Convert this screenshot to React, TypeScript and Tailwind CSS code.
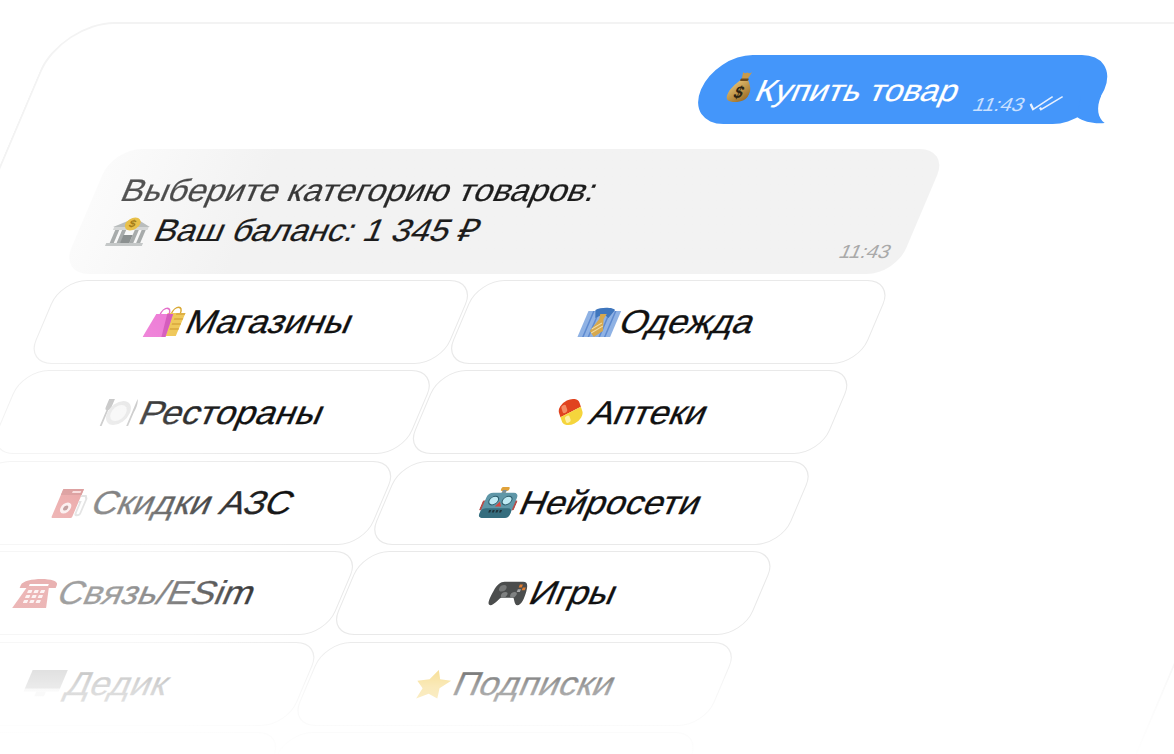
import type { ReactNode } from 'react'

function Glyph({ box, className, children }: { box: string; className: string; children: ReactNode }) {
  return (
    <svg viewBox={box} preserveAspectRatio="none" className={`shrink-0 ${className}`}>
      {children}
    </svg>
  )
}

function MoneyBag() {
  return (
    <Glyph box="4 0 24 32" className="-mt-[6px] w-[20px] h-[32px]">
      <defs>
        <linearGradient id="bagFill" x1="0" y1="0" x2="1" y2="1">
          <stop offset="0" stopColor="#ecc878" />
          <stop offset="1" stopColor="#94651f" />
        </linearGradient>
      </defs>
      <path d="M11 1c2 1.500 3 1.500 5 .5 2 1 3.500 1 5-.5l-2 8h-6z" fill="#c99a4a" />
      <path d="M12 9c-4 4-8 9-8 14 0 6 5 8 12 8s12-2 12-8c0-5-4-10-8-14z" fill="url(#bagFill)" />
      <rect x="11.500" y="7.500" width="9" height="2.500" rx="1" fill="#6d4a1c" />
      <text x="16" y="27" textAnchor="middle" fontSize="17" fontWeight="700" fill="#2c2413" fontFamily="Liberation Sans, sans-serif">$</text>
    </Glyph>
  )
}

function Bank() {
  return (
    <Glyph box="0 0 36 32" className="w-[38px] h-[32px]">
      <path d="M18 3 34 12H2z" fill="#b9bdbd" />
      <rect x="3" y="12" width="30" height="3" fill="#d4d6d6" />
      {[5, 11, 22, 28].map((x) => (
        <rect key={x} x={x} y="15" width="3.500" height="13" fill="#a7abab" />
      ))}
      <rect x="14" y="20" width="8" height="8" fill="#8b9090" />
      <rect x="2" y="28" width="32" height="3" fill="#c5c8c8" />
      <circle cx="18" cy="9" r="6.500" fill="#e8c04a" />
      <text x="18" y="12.500" textAnchor="middle" fontSize="10" fontWeight="700" fill="#a47c18" fontFamily="Liberation Sans, sans-serif">$</text>
    </Glyph>
  )
}

function Bags() {
  return (
    <Glyph box="0 0 34 32" className="w-[31px] h-[32px]">
      <path d="M19 8c0-9 9-9 9 0" fill="none" stroke="#d9a935" strokeWidth="1.500" />
      <rect x="15" y="7" width="18" height="23" fill="#efc85a" />
      <path d="M24 8h9M24 13h9M24 18h9M24 23h9" stroke="#d9a73c" strokeWidth="1.500" />
      <path d="M8 9c0-9 9-9 9 0" fill="none" stroke="#e36fc9" strokeWidth="1.500" />
      <path d="M4 8h17l2 23H0z" fill="#ee7ed7" />
      <path d="M15 8l4 23h4L21 8z" fill="#d55dbd" />
    </Glyph>
  )
}

function Shirt() {
  return (
    <Glyph box="0 0 32 30" className="w-[32px] h-[30px]">
      <rect x="1" y="4" width="30" height="26" fill="#8fb2e4" />
      <path d="M6 4v26M11 4v26M21 4v26M26 4v26" stroke="#5f8bd0" strokeWidth="1.500" />
      <path d="M7 3c3-3 15-3 18 0l-3 8-6-4-6 4z" fill="#3f76bd" />
      <path d="M13 7h6l-1 5 4 12-6 6-6-6 4-12z" fill="#d6a84e" />
      <path d="M11 22l7-6M12 26l8-7" stroke="#f1dca2" strokeWidth="1.200" />
    </Glyph>
  )
}

function Plate() {
  return (
    <Glyph box="0 0 38 30" className="w-[33px] h-[30px]">
      <path d="M3 2v8c0 2 1 3 2 3v16h2V13c1 0 2-1 2-3V2z" fill="#b4b4b4" />
      <circle cx="19" cy="16" r="12" fill="#e2e2e2" />
      <circle cx="19" cy="16" r="8" fill="#f5f5f5" />
      <path d="M33 2c2 3 3 9 2 13v14h-2z" fill="#bdbdbd" />
    </Glyph>
  )
}

function Pill() {
  return (
    <Glyph box="0 0 32 32" className="w-[32px] h-[32px]">
      <g transform="rotate(-35 16 16)">
        <path d="M7 16V11a9 9 0 0 1 18 0v5z" fill="#e0431f" />
        <path d="M7 16v5a9 9 0 0 0 18 0v-5z" fill="#f5d53c" />
        <rect x="10" y="5" width="4" height="9" rx="2" fill="#f48b64" />
        <rect x="10" y="18" width="4" height="8" rx="2" fill="#fdf1a4" />
      </g>
    </Glyph>
  )
}

function Fuel() {
  return (
    <Glyph box="0 0 36 30" className="w-[31px] h-[30px]">
      <rect x="3" y="1" width="22" height="29" rx="1.500" fill="#d75050" />
      <rect x="3" y="1" width="22" height="6" fill="#b83a3a" />
      <rect x="14" y="3" width="9" height="2" fill="#f2b9b9" />
      <circle cx="14" cy="20" r="5.500" fill="#f7dede" />
      <circle cx="14" cy="20" r="2.500" fill="#7a2a2a" />
      <path d="M25 8h5l2 3v14c0 3-5 3-5 0V14h-2" fill="none" stroke="#c4c4c4" strokeWidth="2" />
    </Glyph>
  )
}

function Robot() {
  return (
    <Glyph box="0 0 34 32" className="w-[32px] h-[31px]">
      <rect x="13" y="0" width="8" height="4" rx="1.500" fill="#e0a23a" />
      <rect x="15" y="3" width="4" height="4" fill="#7f8f96" />
      <rect x="0" y="14" width="4" height="10" rx="1" fill="#b84c48" />
      <rect x="30" y="14" width="4" height="10" rx="1" fill="#b84c48" />
      <rect x="2" y="6" width="30" height="26" rx="5" fill="#5f97a8" />
      <rect x="2" y="22" width="30" height="10" rx="4" fill="#356d7e" />
      <circle cx="10.500" cy="14" r="4.500" fill="#bfeaf4" stroke="#2d5e6d" />
      <circle cx="23.500" cy="14" r="4.500" fill="#bfeaf4" stroke="#2d5e6d" />
      <path d="M17 15l3 5h-6z" fill="#d8473f" />
      <path d="M10 25h14" stroke="#20323a" strokeWidth="2.500" strokeDasharray="2 1.500" />
    </Glyph>
  )
}

function Phone() {
  return (
    <Glyph box="0 0 36 32" className="w-[35px] h-[32px]">
      <path d="M1 8C1 0 35 0 35 8v3h-8V7H9v4H1z" fill="#c93f3f" />
      <path d="M8 9h20l6 22H2z" fill="#cf4a4a" />
      {[13, 18, 23].map((y) =>
        [10, 16, 22].map((x) => <rect key={`${x}-${y}`} x={x} y={y} width="4" height="3" rx=".5" fill="#fbe3e3" />),
      )}
    </Glyph>
  )
}

function Gamepad() {
  return (
    <Glyph box="0 0 36 30" className="w-[34px] h-[28px]">
      <path d="M9 3h18c4 0 6 3 7 10 1 8 1 15-3 15-3 0-5-6-7-8H12c-2 2-4 8-7 8-4 0-4-7-3-15C3 6 5 3 9 3z" fill="#4b4d4d" />
      <circle cx="10" cy="10" r="3.500" fill="#767878" />
      <circle cx="14" cy="17" r="3" fill="#7f8181" />
      <circle cx="23" cy="17" r="3" fill="#7f8181" />
      <rect x="25" y="6" width="3" height="3" fill="#e07c2f" />
      <rect x="29" y="9" width="3" height="3" fill="#e07c2f" />
      <rect x="25" y="11" width="3" height="3" fill="#a8a8a8" />
    </Glyph>
  )
}

function Monitor() {
  return (
    <Glyph box="0 0 38 32" className="w-[34px] h-[30px]">
      <rect x="1" y="1" width="36" height="20" fill="#7d7d7d" />
      <rect x="1" y="21" width="36" height="3" fill="#dcdcdc" />
      <rect x="14" y="24" width="10" height="5" fill="#d8d8d8" />
    </Glyph>
  )
}

function Star() {
  return (
    <Glyph box="0 0 34 32" className="w-[33px] h-[30px]">
      <path d="M17 1l5 10 11 1.500-8 8 2 11-10-5-10 5 2-11-8-8L12 11z" fill="#f2c94f" />
    </Glyph>
  )
}

function Key({ icon, label }: { icon?: ReactNode; label?: string }) {
  return (
    <div className="flex h-[84px] items-center justify-center gap-[4px] rounded-[24px] border-[1.5px] border-[#e9e9e9] bg-white text-[33px] text-[#111] [-webkit-text-stroke:0.3px]">
      {icon}
      {label && <span>{label}</span>}
    </div>
  )
}

export default function App() {
  return (
    <div className="relative h-[754px] overflow-hidden bg-white font-['Liberation_Sans',sans-serif]">
      <div className="w-[1500px] origin-top-left pl-[64px] pt-[22px] [transform:skewX(-23deg)_scaleX(1.09)]">
        <div className="h-[900px] w-[1273px] rounded-tl-[50px] border-t-2 border-r-2 border-l-2 border-[#f3f3f3] pt-[31px] pl-[96px]">
          <div className="flex w-[886px] flex-col">
            {/* Outgoing */}
            <div className="relative flex h-[69px] w-[370px] items-center self-end rounded-[34px] bg-[#4496fa] pl-[26px] text-white">
              <MoneyBag />
              <span className="ml-[6px] mt-[3px] text-[30.5px] [-webkit-text-stroke:0.2px]">Купить товар</span>
              <span className="ml-[19px] mt-[31px] text-[19px] text-[#c9e0ff]">11:43</span>
              <svg viewBox="0 0 36 16" className="ml-[5px] mt-[27px] h-[16px] w-[33px]" fill="none" stroke="#e6f0ff" strokeWidth="2">
                <path d="M1 9l5 6L20 1M12 13l2 2L30 1" />
              </svg>
              <svg viewBox="0 0 40 30" preserveAspectRatio="none" className="absolute right-[-18px] bottom-0 h-[30px] w-[37px]">
                <path d="M0 2H20C20 14 26 24 35 29 25 30 14 28 5 23Z" fill="#4496fa" />
              </svg>
            </div>

            {/* Incoming */}
            <div className="mt-[25px] flex h-[125px] w-[766px] flex-col rounded-[26px] bg-gradient-to-r from-[#fbfbfb] to-[#f2f2f2] to-[20%] pt-[22px] pr-[13px] pl-[25px] text-[31.2px] leading-[40px] text-[#1c1c1c] [-webkit-text-stroke:0.2px]">
              <p className="bg-gradient-to-r from-[#555] to-[#1c1c1c] to-[45%] bg-clip-text text-transparent">Выберите категорию товаров:</p>
              <p className="ml-[3px] flex items-center gap-[5px]">
                <Bank />
                Ваш баланс: 1 345 ₽
              </p>
              <span className="-mt-[11px] self-end text-[19px] leading-[24px] text-[#a9a9a9] [-webkit-text-stroke:0]">11:43</span>
            </div>

            {/* Keyboard */}
            <div className="mt-[6px] ml-[3px] grid w-[764px] grid-cols-2 gap-x-[2px] gap-y-[6.4px]">
              <Key icon={<Bags />} label="Магазины" />
              <Key icon={<Shirt />} label="Одежда" />
              <Key icon={<Plate />} label="Рестораны" />
              <Key icon={<Pill />} label="Аптеки" />
              <Key icon={<Fuel />} label="Скидки АЗС" />
              <Key icon={<Robot />} label="Нейросети" />
              <Key icon={<Phone />} label="Связь/ESim" />
              <Key icon={<Gamepad />} label="Игры" />
              <Key icon={<Monitor />} label="Дедик" />
              <Key icon={<Star />} label="Подписки" />
              <Key />
              <Key />
            </div>
          </div>
        </div>
      </div>

      {/* Fade towards the bottom left corner */}
      <div className="pointer-events-none absolute inset-0 bg-[radial-gradient(ellipse_330px_470px_at_0_700px,rgba(255,255,255,0.6)_40%,rgba(255,255,255,0.45)_60%,rgba(255,255,255,0.1)_85%,rgba(255,255,255,0)_95%)]" />
      <div className="pointer-events-none absolute inset-0 bg-[linear-gradient(to_bottom,rgba(255,255,255,0)_84%,rgba(255,255,255,0.6)_91%,rgba(255,255,255,0.95)_100%)]" />
    </div>
  )
}
